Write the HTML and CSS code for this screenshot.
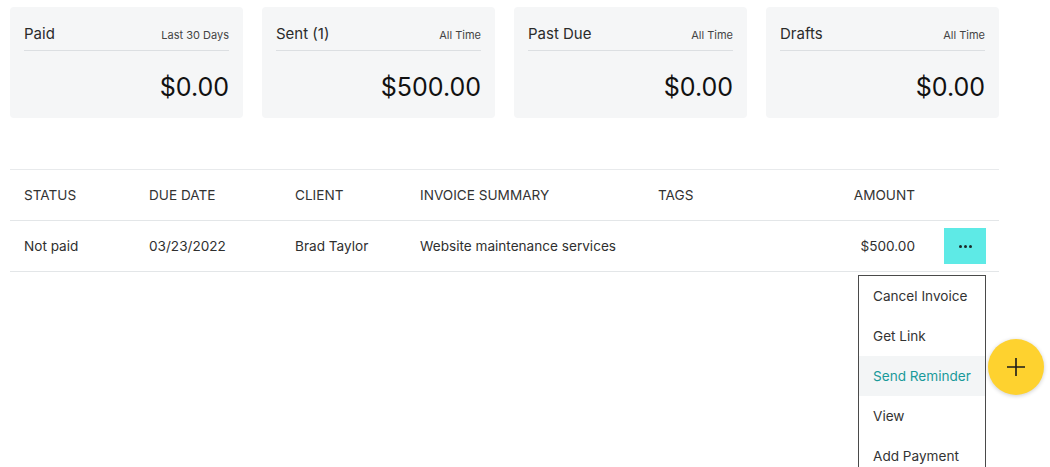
FILE: index.html
```html
<!DOCTYPE html>
<html lang="en">
<head>
    <meta charset="UTF-8">
    <meta name="viewport" content="width=device-width, initial-scale=1.0">
    <title>Invoices</title>
    <link rel="stylesheet" href="styles.css">
</head>
<body>

<div class="page">
    <div class="summary">
        <div class="card">
            <div class="card-head">
                <span class="card-title">Paid</span>
                <span class="card-range">Last 30 Days</span>
            </div>
            <div class="card-amount">$0.00</div>
        </div>
        <div class="card">
            <div class="card-head">
                <span class="card-title">Sent (1)</span>
                <span class="card-range">All Time</span>
            </div>
            <div class="card-amount">$500.00</div>
        </div>
        <div class="card">
            <div class="card-head">
                <span class="card-title">Past Due</span>
                <span class="card-range">All Time</span>
            </div>
            <div class="card-amount">$0.00</div>
        </div>
        <div class="card">
            <div class="card-head">
                <span class="card-title">Drafts</span>
                <span class="card-range">All Time</span>
            </div>
            <div class="card-amount">$0.00</div>
        </div>
    </div>

    <div class="invoices">
        <div class="row head">
            <span>STATUS</span>
            <span>DUE DATE</span>
            <span>CLIENT</span>
            <span>INVOICE SUMMARY</span>
            <span>TAGS</span>
            <span class="amount">AMOUNT</span>
            <span></span>
        </div>
        <div class="row">
            <span>Not paid</span>
            <span>03/23/2022</span>
            <span>Brad Taylor</span>
            <span>Website maintenance services</span>
            <span></span>
            <span class="amount">$500.00</span>
            <span class="actions">
                <button class="more" type="button"><span></span><span></span><span></span></button>
                <ul class="menu">
                    <li>Cancel Invoice</li>
                    <li>Get Link</li>
                    <li class="active">Send Reminder</li>
                    <li>View</li>
                    <li>Add Payment</li>
                </ul>
            </span>
        </div>
    </div>
</div>

<button class="fab" type="button">
    <svg width="20" height="20" viewBox="0 0 20 20"><path d="M10 1v18M1 10h18" stroke="#1b1b1b" stroke-width="1.6" fill="none"/></svg>
</button>

</body>
</html>
```

FILE: styles.css
```css
html, body {
    height: 467px;
    overflow: hidden;
}
body {
    font-family: 'Inter', 'Liberation Sans', sans-serif;
    color: #2f2f2f;
    background-color: #fff;
    margin: 0;
    padding: 0;
}
.page {
    width: 989px;
    padding: 7px 0 0 10px;
}
.summary {
    display: grid;
    grid-template-columns: repeat(4, 233px);
    gap: 19px;
}
.card {
    height: 111px;
    box-sizing: border-box;
    padding: 17px 14px 0 14px;
    background-color: #f5f6f7;
    border-radius: 4px;
}
.card-head {
    display: flex;
    justify-content: space-between;
    align-items: baseline;
    padding-bottom: 6px;
    border-bottom: 1px solid #dcdfe2;
}
.card-title {
    font-size: 15px;
    line-height: 20px;
    color: #2b2b2b;
}
.card-range {
    font-size: 11px;
    color: #444;
}
.card-amount {
    margin-top: 20px;
    text-align: right;
    font-size: 25px;
    line-height: 32px;
    color: #111;
}
.invoices {
    margin-top: 51px;
    border-top: 1px solid #e8eaec;
}
.row {
    display: grid;
    grid-template-columns: 125px 146px 125px 238px 1fr 110px 71px;
    align-items: center;
    height: 50px;
    padding: 0 13px 0 14px;
    border-bottom: 1px solid #e3e6e8;
    font-size: 13.6px;
}
.row.head {
    color: #333;
}
.row .amount {
    text-align: right;
}
.actions {
    position: relative;
    display: flex;
    justify-content: flex-end;
}
.more {
    width: 42px;
    height: 36px;
    border: none;
    background-color: #5eeae6;
    display: flex;
    justify-content: center;
    align-items: center;
    gap: 2px;
    padding: 0;
    cursor: pointer;
}
.more span {
    width: 3px;
    height: 3px;
    border-radius: 50%;
    background-color: #1d2a2a;
}
.menu {
    position: absolute;
    top: 47px;
    right: 0;
    width: 126px;
    margin: 0;
    padding: 0;
    list-style: none;
    background-color: #fff;
    border: 1px solid #4a4a4a;
    z-index: 2;
}
.menu li {
    height: 40px;
    line-height: 40px;
    padding-left: 14px;
    font-size: 13.6px;
    color: #333;
    white-space: nowrap;
}
.menu li.active {
    background-color: #f3f5f6;
    color: #1a9a9a;
}
.fab {
    position: fixed;
    left: 988px;
    top: 339px;
    width: 56px;
    height: 56px;
    border: none;
    border-radius: 50%;
    background-color: #fed22f;
    box-shadow: 0 1px 4px rgba(0, 0, 0, 0.2);
    display: flex;
    justify-content: center;
    align-items: center;
    padding: 0;
    cursor: pointer;
}
```
